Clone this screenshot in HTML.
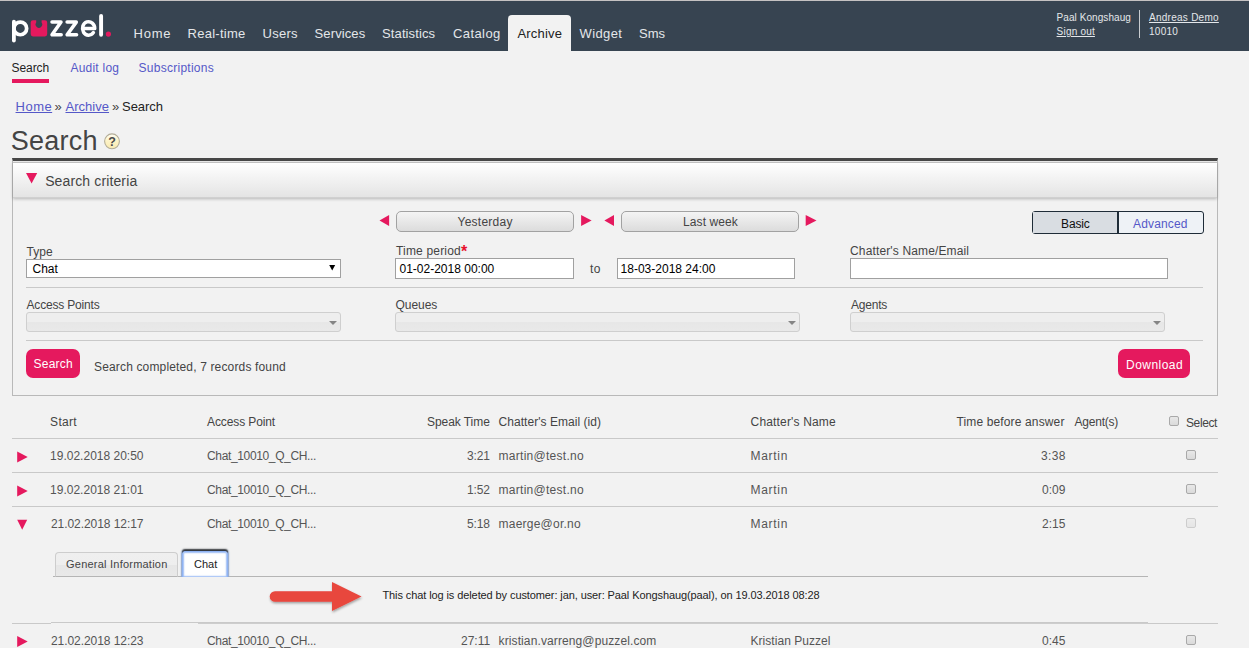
<!DOCTYPE html>
<html><head><meta charset="utf-8"><title>Search</title>
<style>
html,body{margin:0;padding:0;}
body{width:1249px;height:648px;overflow:hidden;background:#f2f2f2;font-family:"Liberation Sans",sans-serif;position:relative;}
.t{position:absolute;white-space:nowrap;font-family:"Liberation Sans",sans-serif;}
.a{position:absolute;box-sizing:border-box;}
.hl{position:absolute;height:1px;background:#c9c9c9;}
.dsel{position:absolute;box-sizing:border-box;height:20px;border:1px solid #cfcfcf;border-radius:3px;background:linear-gradient(#eeeeee 0%,#eeeeee 48%,#e7e7e7 52%,#e9e9e9 100%);}
.dsel:after{content:"";position:absolute;right:3px;top:8px;border-left:4px solid transparent;border-right:4px solid transparent;border-top:4px solid #858585;}
.inp{position:absolute;box-sizing:border-box;background:#fff;border:1px solid #a0a0a0;}
.gbtn{position:absolute;box-sizing:border-box;border:1px solid #a2a2a2;border-radius:5px;background:linear-gradient(#f4f4f4,#dcdcdc);}
.pbtn{position:absolute;box-sizing:border-box;background:#e5195e;border-radius:7px;}
.cb{position:absolute;box-sizing:border-box;width:10px;height:10px;border:1px solid #a9a9a9;border-radius:2px;background:linear-gradient(#e8e8e8,#dadada);}
svg{position:absolute;left:0;top:0;}
</style></head><body>
<!-- header -->
<div class="a" style="left:0;top:0;width:1249px;height:51px;background:#374451;border-top:1px solid #c5c2c2;"></div>
<div class="a" style="left:508px;top:15px;width:63px;height:36px;background:#f2f2f2;border-radius:4px 4px 0 0;"></div>
<div class="a" style="left:1139px;top:10px;width:1px;height:28px;background:#c8ccd0;"></div>
<!-- subnav underline -->
<div class="a" style="left:12px;top:79px;width:37px;height:4px;background:#e5195e;"></div>
<!-- panel -->
<div class="a" style="left:12px;top:158px;width:1206px;height:238px;border:1px solid #b9b9b9;border-top:3px solid #474747;"></div>
<div class="a" style="left:13px;top:162px;width:1204px;height:36px;border-top:1px solid #c0c0c0;background:linear-gradient(#ffffff 0%,#f4f4f4 40%,#e4e4e4 100%);box-shadow:0 1px 3px rgba(0,0,0,0.25);border-bottom:1px solid #d0d0d0;"></div>
<!-- separators in panel -->
<div class="hl" style="left:26px;top:287px;width:1177px;"></div>
<div class="hl" style="left:26px;top:340px;width:1177px;"></div>
<!-- quick buttons -->
<div class="gbtn" style="left:396px;top:211px;width:178px;height:21px;"></div>
<div class="gbtn" style="left:621px;top:211px;width:178px;height:21px;"></div>
<!-- basic/advanced -->
<div class="a" style="left:1032px;top:211px;width:172px;height:23px;border:1px solid #1f2c38;border-radius:3px;background:#eef2f6;"></div>
<div class="a" style="left:1033px;top:212px;width:86px;height:21px;background:#d9dde2;border-right:2px solid #1f2c38;"></div>
<!-- inputs -->
<div class="inp" style="left:26px;top:259px;width:315px;height:19px;"></div>
<div class="inp" style="left:395px;top:258px;width:179px;height:21px;"></div>
<div class="inp" style="left:617px;top:258px;width:178px;height:21px;"></div>
<div class="inp" style="left:850px;top:258px;width:318px;height:21px;"></div>
<div class="dsel" style="left:26px;top:312px;width:315px;"></div>
<div class="dsel" style="left:395px;top:312px;width:405px;"></div>
<div class="dsel" style="left:850px;top:312px;width:315px;"></div>
<!-- pink buttons -->
<div class="pbtn" style="left:26px;top:349px;width:54px;height:29px;"></div>
<div class="pbtn" style="left:1118px;top:349px;width:72px;height:29px;"></div>
<!-- table lines -->
<div class="hl" style="left:12px;top:438px;width:1206px;"></div>
<div class="hl" style="left:12px;top:472px;width:1206px;"></div>
<div class="hl" style="left:12px;top:506px;width:1206px;"></div>
<div class="hl" style="left:12px;top:623px;width:39px;"></div>
<div class="hl" style="left:51px;top:622px;width:1097px;"></div>
<div class="hl" style="left:198px;top:623px;width:950px;background:#cdcdcd;"></div>
<div class="hl" style="left:1148px;top:623px;width:70px;"></div>
<!-- tabs -->
<div class="hl" style="left:53px;top:576px;width:1095px;background:#b5b5b5;"></div>
<div class="a" style="left:55px;top:552px;width:123px;height:25px;border:1px solid #cdcdcd;border-bottom:1px solid #b5b5b5;border-radius:4px 4px 0 0;background:linear-gradient(#efefef 0%,#eeeeee 50%,#e6e6e6 52%,#e9e9e9 100%);"></div>
<div class="a" style="left:170px;top:540px;width:70px;height:37px;overflow:hidden;"><div class="a" style="left:12px;top:11px;width:46px;height:27px;border:1px solid #8fb3f3;border-radius:3px 3px 0 0;background:#fff;box-shadow:inset 0 0 1.5px 1px #9dbdf5, 0 -1.5px 1.5px 0 rgba(25,25,25,0.85), 0 0 1.5px 0.5px #a8c4f6;"></div></div>
<!-- checkboxes -->
<div class="cb" style="left:1169px;top:416px;"></div>
<div class="cb" style="left:1186px;top:450px;"></div>
<div class="cb" style="left:1186px;top:484px;"></div>
<div class="cb" style="left:1186px;top:518px;opacity:0.5;"></div>
<div class="cb" style="left:1186px;top:635px;"></div>
<svg width="1249" height="648" viewBox="0 0 1249 648">
<!-- logo -->
<g id="logo" fill="none" stroke="#fff" stroke-linecap="round" stroke-linejoin="round">
<circle cx="20.3" cy="28.4" r="6.35" stroke-width="3.7"/>
<path d="M13.9 21.6 V40.5" stroke-width="3.8"/>
<path d="M52 22.1 H61 L52 34.8 H61.2" stroke-width="3.5"/>
<path d="M67.1 22.1 H76.3 L67.1 34.8 H76.6" stroke-width="3.5"/>
<path d="M82.6 28.6 H94.7 A6.1 6.75 0 1 0 93.4 32.6" stroke-width="3.5"/>
<path d="M101.1 15.9 V34.7" stroke-width="3.9"/>
<path d="M33 20.3 H36.2 V22.6 A3.3 3.3 0 1 0 41.6 22.6 V20.3 H44.9 Q47.2 20.3 47.2 22.6 V34.1 Q47.2 36.4 44.9 36.4 H33 Q30.7 36.4 30.7 34.1 V22.6 Q30.7 20.3 33 20.3 Z" fill="#e5195e" stroke="none"/>
<circle cx="108.4" cy="34.1" r="2.6" fill="#e5195e" stroke="none"/>
</g>
<!-- help icon -->
<circle cx="112" cy="141.3" r="7.4" fill="url(#hg)" stroke="#b3ad98" stroke-width="1.1"/>
<text x="108.3" y="145.8" font-family="Liberation Sans" font-weight="bold" font-size="12.5" fill="#4a4a4a">?</text>
<!-- panel triangle -->
<path d="M26 173 H37.2 L31.6 183.6 Z" fill="#e5195e"/>
<!-- select arrow -->
<path d="M329.2 265 H335.2 L332.2 270.6 Z" fill="#000"/>
<!-- quick arrows -->
<path d="M389.1 215 V226 L379.5 220.5 Z" fill="#e5195e"/>
<path d="M581.1 215 V226 L591.6 220.5 Z" fill="#e5195e"/>
<path d="M614 215 V226 L604.4 220.5 Z" fill="#e5195e"/>
<path d="M805.7 215 V226 L816.5 220.5 Z" fill="#e5195e"/>
<!-- row arrows -->
<path d="M17.2 451.5 V462.6 L27.7 457 Z" fill="#e5195e"/>
<path d="M17.2 485.5 V496.6 L27.7 491 Z" fill="#e5195e"/>
<path d="M17.2 519.8 H27.2 L22.2 529.8 Z" fill="#e5195e"/>
<path d="M17.2 636 V647.1 L27.7 641.5 Z" fill="#e5195e"/>
<!-- red arrow -->
<g filter="url(#sh)">
<path d="M275 591.2 H332 V582 L361.5 596.5 L332 611 V601.8 H275 A5.3 5.3 0 0 1 275 591.2 Z" fill="#e8463d"/>
</g>
<defs><linearGradient id="hg" x1="0" y1="0" x2="0" y2="1"><stop offset="0" stop-color="#fffef6"/><stop offset="0.45" stop-color="#fdf3c8"/><stop offset="1" stop-color="#f9eab0"/></linearGradient><filter id="sh" x="-10%" y="-30%" width="120%" height="170%"><feDropShadow dx="0.5" dy="1.5" stdDeviation="1.2" flood-color="#000" flood-opacity="0.35"/></filter></defs>
</svg>
<span class="t" id="t0" style="left:133.56px;top:24.0px;font-size:13px;line-height:19px;color:#e4e7ea;letter-spacing:0.780px;">Home</span>
<span class="t" id="t1" style="left:187.62px;top:24.0px;font-size:13px;line-height:19px;color:#e4e7ea;letter-spacing:0.248px;">Real-time</span>
<span class="t" id="t2" style="left:262.60px;top:24.0px;font-size:13px;line-height:19px;color:#e4e7ea;letter-spacing:0.270px;">Users</span>
<span class="t" id="t3" style="left:314.60px;top:24.0px;font-size:13px;line-height:19px;color:#e4e7ea;letter-spacing:0.103px;">Services</span>
<span class="t" id="t4" style="left:382.10px;top:24.0px;font-size:13px;line-height:19px;color:#e4e7ea;letter-spacing:0.100px;">Statistics</span>
<span class="t" id="t5" style="left:453.08px;top:24.0px;font-size:13px;line-height:19px;color:#e4e7ea;letter-spacing:0.390px;">Catalog</span>
<span class="t" id="t6" style="left:579.54px;top:24.0px;font-size:13px;line-height:19px;color:#e4e7ea;letter-spacing:0.396px;">Widget</span>
<span class="t" id="t7" style="left:639.10px;top:24.0px;font-size:13px;line-height:19px;color:#e4e7ea;letter-spacing:0.000px;">Sms</span>
<span class="t" id="t8" style="left:517.46px;top:24.0px;font-size:13px;line-height:19px;color:#222;letter-spacing:0.180px;">Archive</span>
<span class="t" id="t9" style="left:1056.58px;top:10.0px;font-size:10px;line-height:15px;color:#e4e7ea;letter-spacing:0.069px;">Paal Kongshaug</span>
<span class="t" id="t10" style="left:1056.58px;top:24.0px;font-size:10px;line-height:15px;color:#e4e7ea;letter-spacing:0.206px;text-decoration:underline;">Sign out</span>
<span class="t" id="t11" style="left:1149.02px;top:10.0px;font-size:10px;line-height:15px;color:#e4e7ea;letter-spacing:0.262px;text-decoration:underline;">Andreas Demo</span>
<span class="t" id="t12" style="left:1149.02px;top:24.0px;font-size:10px;line-height:15px;color:#e4e7ea;letter-spacing:0.270px;">10010</span>
<span class="t" id="t13" style="left:11.56px;top:59.0px;font-size:12px;line-height:18px;color:#222;letter-spacing:-0.072px;">Search</span>
<span class="t" id="t14" style="left:70.46px;top:59.0px;font-size:12px;line-height:18px;color:#5558c8;letter-spacing:0.225px;">Audit log</span>
<span class="t" id="t15" style="left:138.62px;top:59.0px;font-size:12px;line-height:18px;color:#5558c8;letter-spacing:0.255px;">Subscriptions</span>
<span class="t" id="t16" style="left:15.56px;top:97.0px;font-size:13px;line-height:19px;color:#5558c8;letter-spacing:0.480px;text-decoration:underline;">Home</span>
<span class="t" id="t17" style="left:54.62px;top:97.0px;font-size:13px;line-height:19px;color:#444;letter-spacing:0.000px;">»</span>
<span class="t" id="t18" style="left:65.48px;top:97.0px;font-size:13px;line-height:19px;color:#5558c8;letter-spacing:0.030px;text-decoration:underline;">Archive</span>
<span class="t" id="t19" style="left:112.04px;top:97.0px;font-size:13px;line-height:19px;color:#444;letter-spacing:0.000px;">»</span>
<span class="t" id="t20" style="left:122.10px;top:97.0px;font-size:13px;line-height:19px;color:#222;letter-spacing:-0.072px;">Search</span>
<span class="t" id="t21" style="left:10.70px;top:124.0px;font-size:27px;line-height:34px;color:#444;letter-spacing:0.252px;">Search</span>
<span class="t" id="t22" style="left:45.14px;top:171.0px;font-size:14px;line-height:20px;color:#444;letter-spacing:0.129px;">Search criteria</span>
<span class="t" id="t23" style="left:26.54px;top:243.0px;font-size:12px;line-height:18px;color:#444;letter-spacing:0.060px;">Type</span>
<span class="t" id="t24" style="left:396.00px;top:242.0px;font-size:12px;line-height:18px;color:#444;letter-spacing:0.180px;">Time period</span>
<span class="t" id="t25" style="left:461.00px;top:241.0px;font-size:16px;line-height:21px;color:#e8112d;letter-spacing:0.000px;font-weight:bold;">*</span>
<span class="t" id="t26" style="left:850.02px;top:242.0px;font-size:12px;line-height:18px;color:#444;letter-spacing:0.142px;">Chatter's Name/Email</span>
<span class="t" id="t27" style="left:26.50px;top:296.0px;font-size:12px;line-height:18px;color:#444;letter-spacing:-0.180px;">Access Points</span>
<span class="t" id="t28" style="left:395.50px;top:296.0px;font-size:12px;line-height:18px;color:#444;letter-spacing:-0.036px;">Queues</span>
<span class="t" id="t29" style="left:851.02px;top:296.0px;font-size:12px;line-height:18px;color:#444;letter-spacing:-0.216px;">Agents</span>
<span class="t" id="t30" style="left:590.00px;top:260.0px;font-size:12px;line-height:18px;color:#444;letter-spacing:0.540px;">to</span>
<span class="t" id="t31" style="left:457.56px;top:213.0px;font-size:12px;line-height:18px;color:#444;letter-spacing:0.247px;">Yesterday</span>
<span class="t" id="t32" style="left:683.06px;top:213.0px;font-size:12px;line-height:18px;color:#444;letter-spacing:0.090px;">Last week</span>
<span class="t" id="t33" style="left:1061.12px;top:215.0px;font-size:12px;line-height:18px;color:#111;letter-spacing:-0.180px;">Basic</span>
<span class="t" id="t34" style="left:1133.02px;top:215.0px;font-size:12px;line-height:18px;color:#5558c8;letter-spacing:0.154px;">Advanced</span>
<span class="t" id="t35" style="left:32.50px;top:260.0px;font-size:12px;line-height:18px;color:#000;letter-spacing:0.000px;">Chat</span>
<span class="t" id="t36" style="left:399.50px;top:260.0px;font-size:12px;line-height:18px;color:#000;letter-spacing:0.000px;">01-02-2018 00:00</span>
<span class="t" id="t37" style="left:620.60px;top:260.0px;font-size:12px;line-height:18px;color:#000;letter-spacing:0.000px;">18-03-2018 24:00</span>
<span class="t" id="t38" style="left:33.62px;top:355.0px;font-size:12px;line-height:18px;color:#fff;letter-spacing:0.216px;">Search</span>
<span class="t" id="t39" style="left:1126.06px;top:356.0px;font-size:12px;line-height:18px;color:#fff;letter-spacing:0.463px;">Download</span>
<span class="t" id="t40" style="left:94.04px;top:358.0px;font-size:12px;line-height:18px;color:#444;letter-spacing:0.152px;">Search completed, 7 records found</span>
<span class="t" id="t41" style="left:50.10px;top:413.0px;font-size:12px;line-height:18px;color:#444;letter-spacing:0.315px;">Start</span>
<span class="t" id="t42" style="left:207.04px;top:413.0px;font-size:12px;line-height:18px;color:#444;letter-spacing:-0.115px;">Access Point</span>
<span class="t" id="t43" style="left:427.02px;top:413.0px;font-size:12px;line-height:18px;color:#444;letter-spacing:-0.060px;">Speak Time</span>
<span class="t" id="t44" style="left:498.56px;top:413.0px;font-size:12px;line-height:18px;color:#444;letter-spacing:0.038px;">Chatter's Email (id)</span>
<span class="t" id="t45" style="left:750.56px;top:413.0px;font-size:12px;line-height:18px;color:#444;letter-spacing:0.166px;">Chatter's Name</span>
<span class="t" id="t46" style="left:956.46px;top:413.0px;font-size:12px;line-height:18px;color:#444;letter-spacing:0.138px;">Time before answer</span>
<span class="t" id="t47" style="left:1074.46px;top:413.0px;font-size:12px;line-height:18px;color:#444;letter-spacing:-0.206px;">Agent(s)</span>
<span class="t" id="t48" style="left:1186.02px;top:414.0px;font-size:12px;line-height:18px;color:#444;letter-spacing:-0.396px;">Select</span>
<span class="t" id="t49" style="left:50.10px;top:447.0px;font-size:12px;line-height:18px;color:#555;letter-spacing:0.000px;">19.02.2018 20:50</span>
<span class="t" id="t50" style="left:207.04px;top:447.0px;font-size:12px;line-height:18px;color:#555;letter-spacing:-0.360px;">Chat_10010_Q_CH...</span>
<span class="t" id="t51" style="left:467.04px;top:447.0px;font-size:12px;line-height:18px;color:#555;letter-spacing:-0.180px;">3:21</span>
<span class="t" id="t52" style="left:498.56px;top:447.0px;font-size:12px;line-height:18px;color:#555;letter-spacing:0.277px;">martin@test.no</span>
<span class="t" id="t53" style="left:750.56px;top:447.0px;font-size:12px;line-height:18px;color:#555;letter-spacing:0.684px;">Martin</span>
<span class="t" id="t54" style="left:1041.10px;top:447.0px;font-size:12px;line-height:18px;color:#555;letter-spacing:0.300px;">3:38</span>
<span class="t" id="t55" style="left:50.10px;top:481.0px;font-size:12px;line-height:18px;color:#555;letter-spacing:0.000px;">19.02.2018 21:01</span>
<span class="t" id="t56" style="left:207.04px;top:481.0px;font-size:12px;line-height:18px;color:#555;letter-spacing:-0.360px;">Chat_10010_Q_CH...</span>
<span class="t" id="t57" style="left:467.04px;top:481.0px;font-size:12px;line-height:18px;color:#555;letter-spacing:-0.180px;">1:52</span>
<span class="t" id="t58" style="left:498.56px;top:481.0px;font-size:12px;line-height:18px;color:#555;letter-spacing:0.277px;">martin@test.no</span>
<span class="t" id="t59" style="left:750.56px;top:481.0px;font-size:12px;line-height:18px;color:#555;letter-spacing:0.684px;">Martin</span>
<span class="t" id="t60" style="left:1042.00px;top:481.0px;font-size:12px;line-height:18px;color:#555;letter-spacing:0.000px;">0:09</span>
<span class="t" id="t61" style="left:51.00px;top:515.0px;font-size:12px;line-height:18px;color:#555;letter-spacing:-0.060px;">21.02.2018 12:17</span>
<span class="t" id="t62" style="left:207.04px;top:515.0px;font-size:12px;line-height:18px;color:#555;letter-spacing:-0.360px;">Chat_10010_Q_CH...</span>
<span class="t" id="t63" style="left:467.04px;top:515.0px;font-size:12px;line-height:18px;color:#555;letter-spacing:-0.180px;">5:18</span>
<span class="t" id="t64" style="left:498.56px;top:515.0px;font-size:12px;line-height:18px;color:#555;letter-spacing:0.229px;">maerge@or.no</span>
<span class="t" id="t65" style="left:750.56px;top:515.0px;font-size:12px;line-height:18px;color:#555;letter-spacing:0.684px;">Martin</span>
<span class="t" id="t66" style="left:1042.00px;top:515.0px;font-size:12px;line-height:18px;color:#555;letter-spacing:0.000px;">2:15</span>
<span class="t" id="t67" style="left:51.00px;top:632.0px;font-size:12px;line-height:18px;color:#555;letter-spacing:-0.060px;">21.02.2018 12:23</span>
<span class="t" id="t68" style="left:207.04px;top:632.0px;font-size:12px;line-height:18px;color:#555;letter-spacing:-0.360px;">Chat_10010_Q_CH...</span>
<span class="t" id="t69" style="left:461.00px;top:632.0px;font-size:12px;line-height:18px;color:#555;letter-spacing:0.000px;">27:11</span>
<span class="t" id="t70" style="left:498.56px;top:632.0px;font-size:12px;line-height:18px;color:#555;letter-spacing:0.111px;">kristian.varreng@puzzel.com</span>
<span class="t" id="t71" style="left:750.56px;top:632.0px;font-size:12px;line-height:18px;color:#555;letter-spacing:0.039px;">Kristian Puzzel</span>
<span class="t" id="t72" style="left:1042.00px;top:632.0px;font-size:12px;line-height:18px;color:#555;letter-spacing:0.000px;">0:45</span>
<span class="t" id="t73" style="left:66.08px;top:556.0px;font-size:11px;line-height:16px;color:#444;letter-spacing:0.220px;">General Information</span>
<span class="t" id="t74" style="left:194.02px;top:556.0px;font-size:11px;line-height:16px;color:#222;letter-spacing:0.000px;">Chat</span>
<span class="t" id="t75" style="left:382.46px;top:587.0px;font-size:11px;line-height:16px;color:#222;letter-spacing:-0.097px;">This chat log is deleted by customer: jan, user: Paal Kongshaug(paal), on 19.03.2018 08:28</span>
</body></html>
